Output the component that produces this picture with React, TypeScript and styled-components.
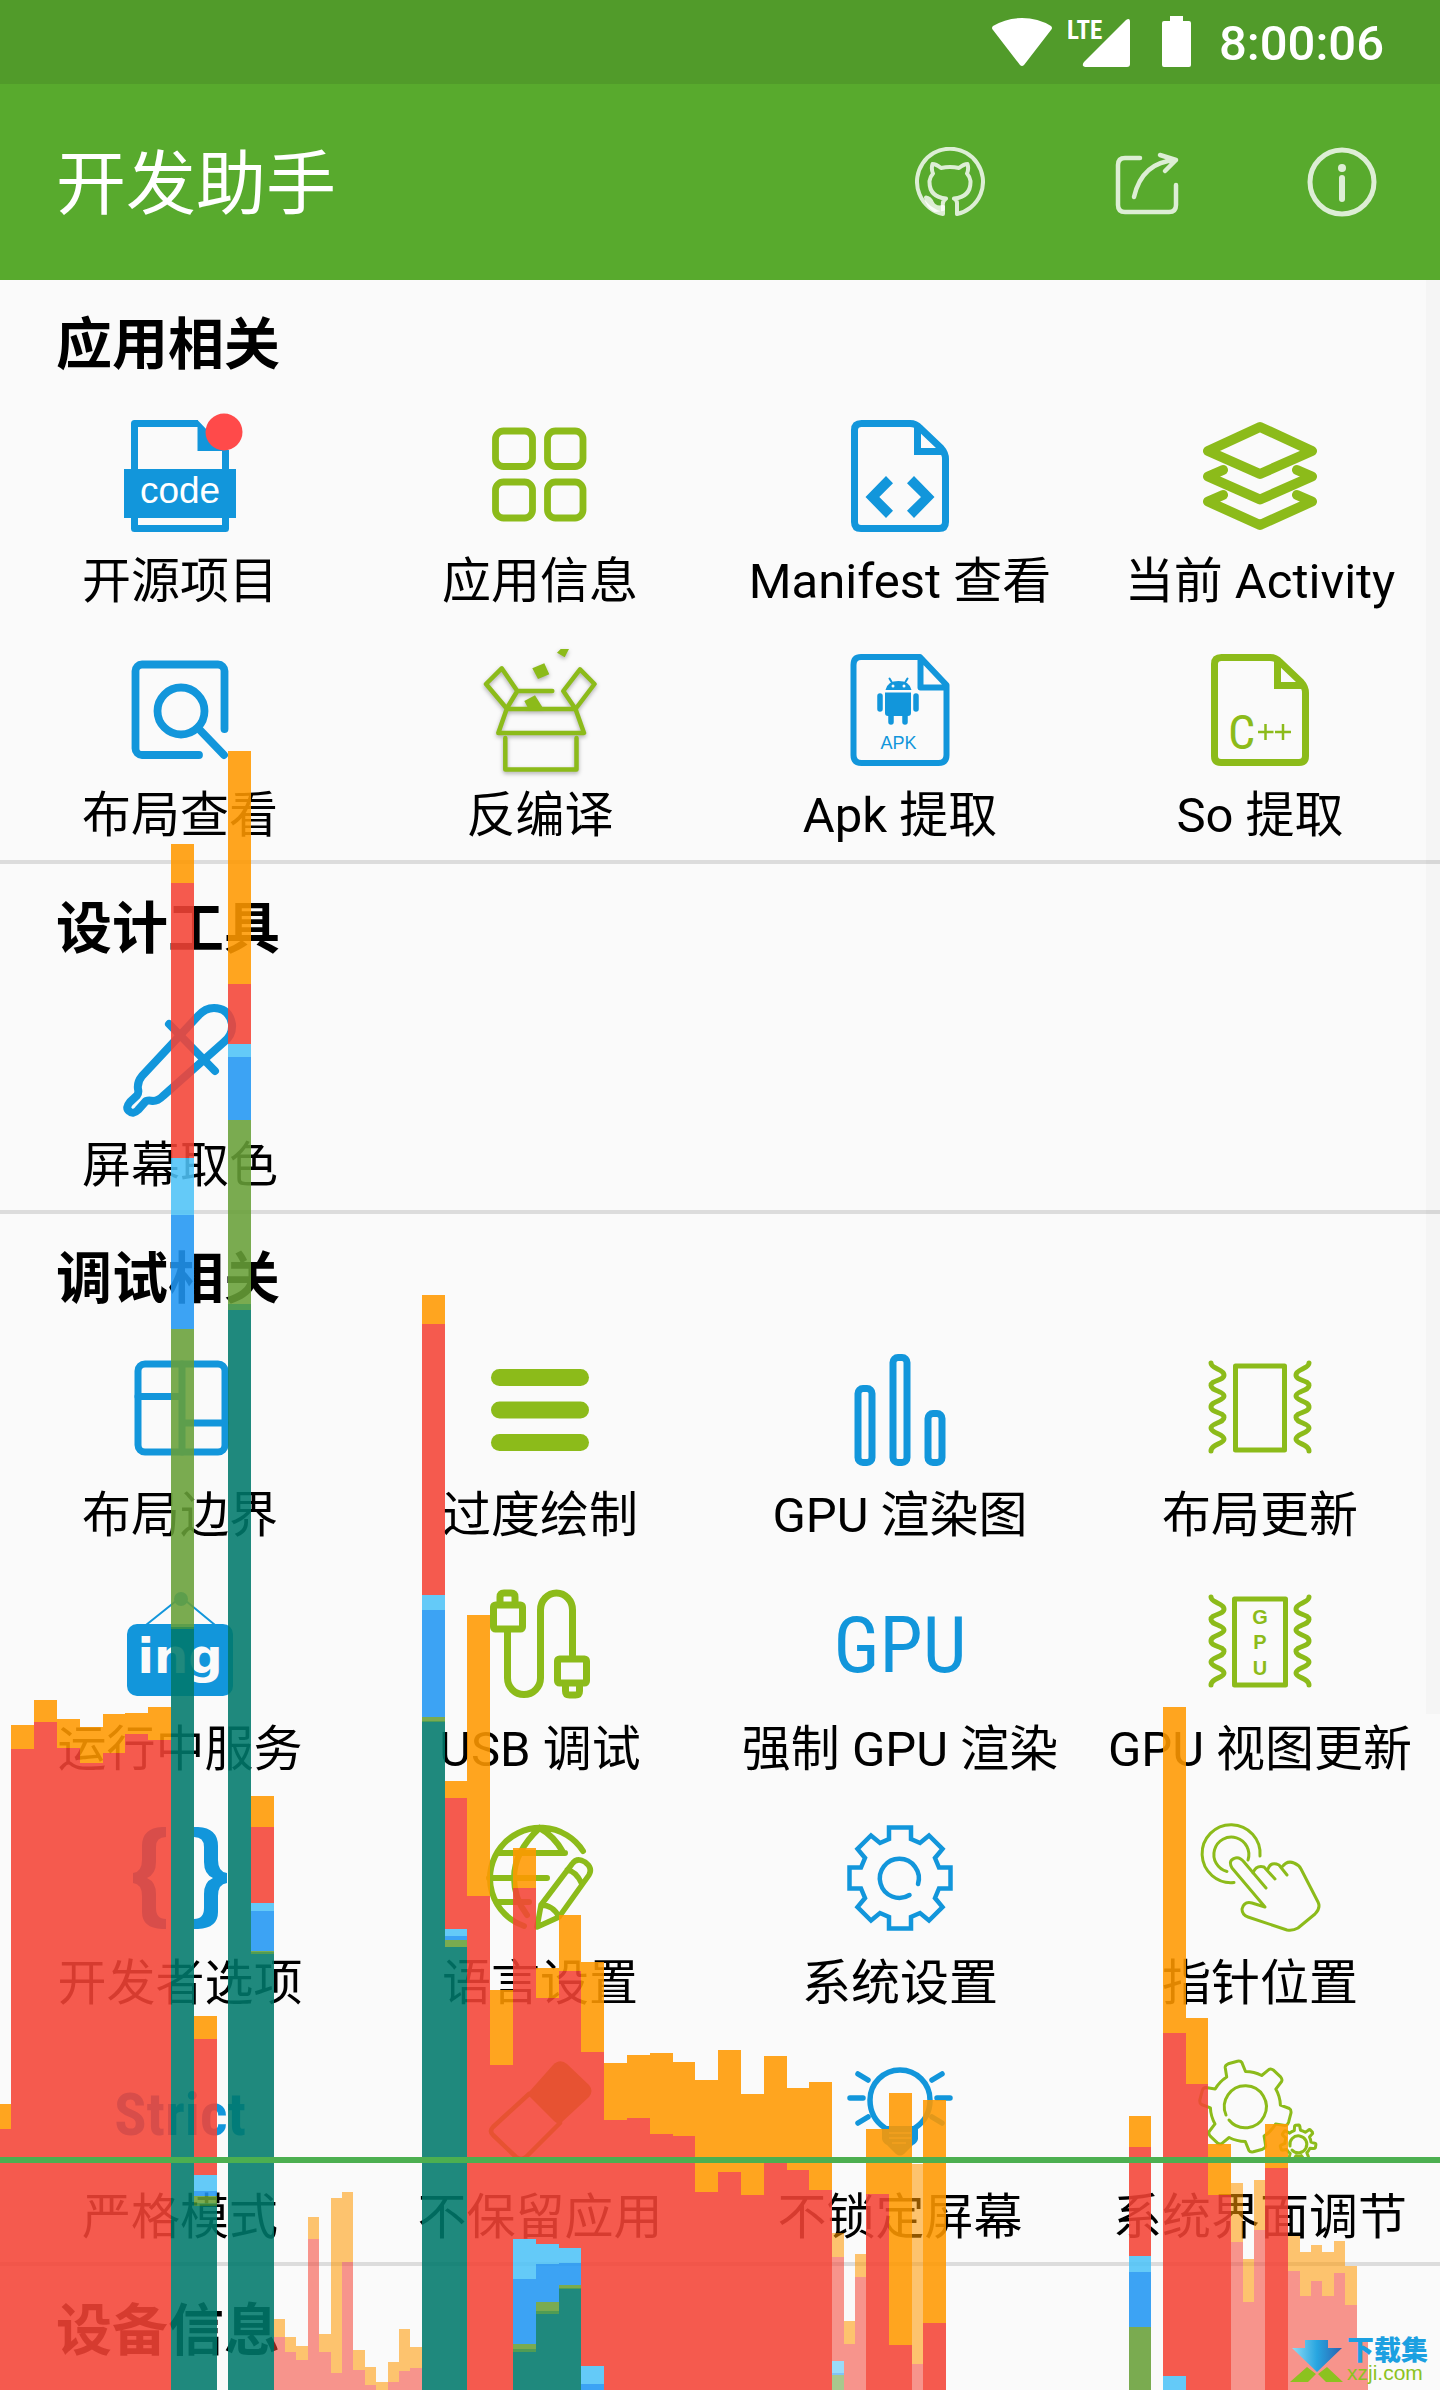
import React from 'react';
import styled, { createGlobalStyle } from 'styled-components';

const BLUE = '#1296db';
const GREEN = '#8cbb1a';
const NARROW = "'Roboto Condensed', 'Liberation Sans Narrow', 'DejaVu Sans Condensed', sans-serif";

const GlobalStyle = createGlobalStyle`
  *, *::before, *::after { box-sizing: border-box; }
  body {
    margin: 0;
    background: #fafafa;
    color: #000;
    font-family: Roboto, 'Noto Sans CJK SC', sans-serif;
  }
  h1, h2, p, ul { margin: 0; padding: 0; }
`;

const Page = styled.div`
  position: relative;
  overflow: hidden;
  min-height: 100vh;
`;

const StatusBar = styled.div`
  display: flex;
  align-items: center;
  justify-content: flex-end;
  height: 84px;
  padding: 0 56px;
  background: #519b2a;
  color: #fff;
`;

const StatusIcon = styled.svg<{ $gap: number }>`
  flex: none;
  margin-right: ${(p) => p.$gap}px;
  fill: #fff;
`;

const Clock = styled.time`
  padding-top: 4px;
  font-size: 49px;
  line-height: 56px;
  font-weight: 500;
`;

const Toolbar = styled.header`
  display: flex;
  align-items: center;
  height: 196px;
  padding-left: 56px;
  background: #58aa2d;
  color: #fff;
`;

const Title = styled.h1`
  flex: 1;
  padding-top: 6px;
  font-size: 70px;
  line-height: 84px;
  font-weight: 400;
`;

const ToolButton = styled.button`
  display: flex;
  align-items: center;
  justify-content: center;
  width: 196px;
  height: 196px;
  padding: 0;
  border: 0;
  background: none;
  color: rgba(255, 255, 255, 0.8);
  cursor: pointer;
`;

const Section = styled.section`
  border-bottom: 4px solid #dcdcdc;
  &:last-child { border-bottom: 0; padding-bottom: 12px; }
`;

const SectionTitle = styled.h2`
  padding: 32px 56px 14px;
  font-size: 56px;
  line-height: 66px;
  font-weight: 700;
`;

const Grid = styled.ul`
  display: grid;
  grid-template-columns: repeat(4, minmax(0, 1fr));
  list-style: none;
`;

const Tile = styled.button`
  display: flex;
  flex-direction: column;
  align-items: center;
  gap: 21px;
  width: 100%;
  padding: 28px 0 15px;
  border: 0;
  background: none;
  color: inherit;
  font-family: inherit;
  font-size: 49px;
  line-height: 58px;
  white-space: nowrap;
  cursor: pointer;
`;

const IconSvg = styled.svg<{ $color: string }>`
  display: block;
  width: 112px;
  height: 112px;
  overflow: visible;
  color: ${(p) => p.$color};
`;

const ScrollThumb = styled.div`
  position: absolute;
  top: 280px;
  right: 0;
  width: 14px;
  height: 60%;
  background: rgba(0, 0, 0, 0.02);
`;

const Overlay = styled.svg`
  position: absolute;
  left: 0;
  bottom: 0;
  width: 100%;
  height: 2390px;
  pointer-events: none;
`;

const Watermark = styled.div`
  position: absolute;
  right: 12px;
  bottom: 7px;
  display: flex;
  align-items: center;
  gap: 4px;
`;

const WatermarkText = styled.div`
  display: flex;
  flex-direction: column;
`;

const WatermarkName = styled.span`
  color: #1ba0e1;
  font-size: 27px;
  line-height: 24px;
  font-weight: 900;
`;

const WatermarkSite = styled.span`
  color: #8cc21f;
  font-family: 'Liberation Sans', sans-serif;
  font-size: 21px;
  line-height: 20px;
  font-weight: 400;
`;

/* ---------- icons ---------- */

const stroke = (width: number) => ({
  fill: 'none',
  stroke: 'currentColor',
  strokeWidth: width,
  strokeLinecap: 'round' as const,
  strokeLinejoin: 'round' as const,
});

const gearPath = (cx: number, cy: number, root: number, tip: number, teeth: number, start: number) => {
  const step = 360 / teeth;
  const at = (deg: number, r: number) => {
    const a = (deg * Math.PI) / 180;
    return `${(cx + r * Math.cos(a)).toFixed(1)} ${(cy + r * Math.sin(a)).toFixed(1)}`;
  };
  let d = '';
  for (let i = 0; i < teeth; i++) {
    const m = start + i * step;
    d += `${i ? 'L' : 'M'}${at(m - step * 0.27, root)}L${at(m - step * 0.19, tip - 2)}Q${at(m - step * 0.17, tip)} ${at(m - step * 0.1, tip)}L${at(m + step * 0.1, tip)}Q${at(m + step * 0.17, tip)} ${at(m + step * 0.19, tip - 2)}L${at(m + step * 0.27, root)}A${root} ${root} 0 0 1 ${at(m + step * 0.73, root)}`;
  }
  return d + 'Z';
};

const DOC = 'M17.5 3.5H66Q72 3.5 76 8L97 28Q101.5 33 101.5 39V102q0 6.5-6.5 6.5H17q-6.5 0-6.5-6.5V10q0-6.5 7-6.5z';
const WAVE = 'M7 9C7 15 20 15 20 21S7 26 7 31.5S20 37 20 42S7 47 7 53S20 58 20 63.5S7 69 7 74S20 80 20 85S7 90 7 97';

const Waves = () => (
  <g {...stroke(5)}>
    <path d={WAVE} />
    <path d={WAVE} transform="matrix(-1 0 0 1 112 0)" />
  </g>
);

const icons: Record<string, React.ReactNode> = {
  code: (
    <>
      <path {...stroke(7)} strokeLinecap="butt" d="M10.5 50V3.5H74M101.5 30V50M10.5 97v11.5h91V97" />
      <path fill="currentColor" d="M73.5 0L105 33H98v-2H73.5z" />
      <path fill="currentColor" d="M0 49h112v49H0z" />
      <text x="56" y="83" fill="#fff" fontFamily="Liberation Sans, sans-serif" fontSize="37" textAnchor="middle">code</text>
      <circle cx="100" cy="12" r="18.5" fill="#ff4a4a" />
    </>
  ),
  apps: (
    <g {...stroke(6.8)}>
      <rect x="11.5" y="11" width="37" height="35.5" rx="8" />
      <rect x="63.5" y="11" width="35.5" height="35.5" rx="8" />
      <rect x="11.5" y="62" width="37" height="36" rx="8" />
      <rect x="63.5" y="62" width="35.5" height="36" rx="8" />
    </g>
  ),
  manifest: (
    <>
      <path {...stroke(7)} d={DOC} />
      <path {...stroke(7)} strokeLinecap="butt" strokeLinejoin="miter" d="M73.5 5V31.5H100" />
      <path fill="currentColor" d="M42 56L21.5 77 42 98l7-7.3L35.3 77 49 63.3zM70 56l20.5 21L70 98l-7-7.3L77 77 63 63.3z" />
    </>
  ),
  layers: (
    <path {...stroke(10)} d="M56 7L108 31 56 54 4 31zM19 50L4 56.5 56 79.5 108 56.5 93 50M19 75L4 81.5 56 105 108 81.5 93 75" />
  ),
  search: (
    <g {...stroke(7.8)}>
      <path d="M100.5 75V17a6.5 6.5 0 0 0-6.500-6.500H18A6.5 6.5 0 0 0 11.500 17V94.500a6.5 6.5 0 0 0 6.500 6.500H75" />
      <circle cx="57" cy="57" r="23.5" />
      <path d="M74 74L100 101" />
    </g>
  ),
  box: (
    <g style={{ filter: 'drop-shadow(0 2px 2px rgba(0,0,0,.3))' }}>
      <path {...stroke(4.5)} d="M17.7 14.3L2 30 22.7 54.5 33.3 37zM33.3 37H68.3M96 15.3L110.5 30 91.5 55 79.3 37zM22.7 55H91.5L100 79H14.3zM21.3 84V115.5H92.5V84" />
      <path fill="currentColor" d="M48.3 14.3l12-5 5 11-11.3 4.7zM40.3 47L51 41.3 58.3 53l-14 1.500zM73-1.3L76.7-5H85l-4.300 8.300z" />
    </g>
  ),
  apk: (
    <>
      <path {...stroke(6)} d="M17 3H76L102.5 31V101q0 8-8 8H17.5q-8 0-8-8V11q0-8 7.5-8zM76.5 4V33.5H102" />
      <path fill="currentColor" d="M41.5 36q2-9 13-9t13 9zM41 38.5H67V59q0 3-3 3H44q-3 0-3-3z" />
      <path {...stroke(2)} d="M45.5 24.5l3 5M63.5 24.5l-3 5" />
      <circle cx="49" cy="32" r="1.5" fill="#fafafa" />
      <circle cx="60" cy="32" r="1.5" fill="#fafafa" />
      <path {...stroke(5.5)} d="M36 42V55M72 42V55M47 60V68M61 60V68" />
      <text x="54.5" y="95" fill="currentColor" fontFamily="Liberation Sans, sans-serif" fontSize="18" textAnchor="middle">APK</text>
    </>
  ),
  cpp: (
    <>
      <path {...stroke(7)} d={DOC} />
      <path {...stroke(7)} strokeLinecap="butt" strokeLinejoin="miter" d="M73.5 5V31.5H100" />
      <text x="24" y="95" fill="currentColor" fontFamily={NARROW} fontSize="48">C</text>
      <path {...stroke(2.5)} strokeLinecap="butt" d="M54 78H69.5M61.500 70V86M71 78H87M79 70V86" />
    </>
  ),
  dropper: (
    <g {...stroke(8)}>
      <path d="M74 12L18 72Q13 78 14 85Q15 89 13 91.5L6 98Q1 104 5 107Q9 111 14 106L22 97Q25 96 29 97Q34 97 39 92L100 38Q109 31 108 20Q105 4 90 4Q81 4 74 12z" />
      <path d="M45 20L91 67" />
    </g>
  ),
  layout: (
    <g {...stroke(7)}>
      <rect x="14" y="10" width="87" height="88" rx="7" />
      <path d="M58 10V98M14 42.5H58M58 69H101" />
    </g>
  ),
  bars: (
    <g fill="currentColor">
      <rect x="7" y="15" width="98" height="17" rx="8.5" />
      <rect x="7" y="47.5" width="98" height="17" rx="8.5" />
      <rect x="7" y="80" width="98" height="17" rx="8.5" />
    </g>
  ),
  chart: (
    <g {...stroke(7)}>
      <rect x="14" y="34.5" width="14" height="74" rx="5" />
      <rect x="49" y="3.5" width="14" height="105" rx="5" />
      <rect x="84" y="59.5" width="14" height="49" rx="5" />
    </g>
  ),
  update: (
    <>
      <Waves />
      <rect {...stroke(5)} x="31.5" y="12" width="49" height="84" />
    </>
  ),
  running: (
    <>
      <circle cx="57" cy="11" r="7" fill="currentColor" />
      <path {...stroke(2)} d="M52 13L22 37M62 13L91 37" />
      <rect x="3" y="36" width="106" height="72" rx="10" fill="currentColor" />
      <text x="56" y="85" fill="#fafafa" fontFamily="DejaVu Sans, sans-serif" fontWeight="700" fontSize="48" textAnchor="middle">ing</text>
    </>
  ),
  usb: (
    <g {...stroke(7)}>
      <rect x="9.5" y="17" width="29" height="24" rx="2" />
      <path d="M16 16V9q0-4 4-4h7q4 0 4 4v7" />
      <path d="M23.5 44V90a16.5 16.5 0 0 0 33 0V22a16 17 0 0 1 32 0V67" />
      <rect x="73.5" y="71" width="29" height="24" rx="2" />
      <path d="M81.5 96v7q0 4 4 4h6q4 0 4-4v-7" />
    </g>
  ),
  gpu: (
    <text x="56" y="84" fill="currentColor" fontFamily={NARROW} fontSize="78" textAnchor="middle">GPU</text>
  ),
  gpuView: (
    <>
      <Waves />
      <rect {...stroke(5)} x="30.5" y="11" width="51" height="86" />
      <g fill="currentColor" fontFamily="Liberation Sans, sans-serif" fontWeight="700" fontSize="20" textAnchor="middle">
        <text x="56" y="36">G</text>
        <text x="56" y="61">P</text>
        <text x="56" y="87">U</text>
      </g>
    </>
  ),
  braces: (
    <g fill="currentColor">
      <path id="brace" d="M42 5H38Q18 6 18 24V38Q18 50 9 51V61Q18 62 18 74V90Q18 106 38 107H42V97Q32 97 32 86V72Q32 60 23 56Q32 52 32 40V25Q32 15 42 15z" />
      <use href="#brace" transform="matrix(-1 0 0 1 112 0)" />
    </g>
  ),
  language: (
    <>
      <path {...stroke(6)} d="M99 29A50.5 50.5 0 1 0 40 104M14 31H81M5 56H63M12 80H45M55.5 6Q30 30 30 56Q30 76 43 93M55.5 6Q70 14 79 30" />
      <path {...stroke(5.5)} d="M53 105L57 83L88 42Q93 35 101 40Q109 46 105 53L75 95ZM83 48Q92 49 98 62M57 83Q69 83 75 95" />
    </>
  ),
  settings: (
    <g {...stroke(4.5)}>
      <path strokeLinejoin="miter" d="M45 5.5H67V17L76 21L85 13.5L98.5 27L91 36L95 45.5H106.5V66.5H95L91 76L98.5 85L85 98.5L76 91L67 95V106.5H45V95L36 91L27 98.5L13.5 85L21 76L17 66.5H5.5V45.5H17L21 36L13.5 27L27 13.5L36 21L45 17Z" />
      <path d="M74 62A19.5 19.5 0 1 0 65.5 73" />
    </g>
  ),
  pointer: (
    <g {...stroke(3)}>
      <path d="M56 34A29 29 0 1 0 30 60.5M44 38A17.5 17.5 0 1 0 23 49.5" />
      <path d="M49 51Q52 43 60 45L71 57M64 47Q67 39 75 43L83 53M78 45Q83 38 90 41Q95 43 97 47L114 80Q117 86 111 92L94 106Q89 109 83 108L44 95Q38 93 38 87Q40 79 48 81L61 85L28 46Q24 39 30 36.5Q35 34 40 40L62 66" />
    </g>
  ),
  strict: (
    <text x="56" y="79" fill="currentColor" fontFamily={NARROW} fontWeight="700" fontSize="60" textAnchor="middle">Strict</text>
  ),
  eraser: (
    <>
      <path fill="currentColor" d="M45 36L69 9Q76 2 83 8L105 29Q110 35 105 41L78 66Q74 69 70 65L45 40z" />
      <path {...stroke(4.5)} d="M45 38L9 71Q5 75 9 79L32 101Q37 105 42 101L76 67" />
    </>
  ),
  bulb: (
    <>
      <path {...stroke(5.5)} d="M41 72Q26 62 26 44A30 30 0 0 1 86 44Q86 62 71 72M6 42H19M14 18L24 24M14 67L24 61M106 42H93M98 18L88 24M98 67L88 61" />
      <path fill="currentColor" d="M38 70H74V83Q73 87 69 89L60 98Q56 101 52 98L43 89Q39 87 38 83z" />
      <path d="M45 77H67M45 82H67M48 87H62" stroke="#fafafa" strokeWidth="1.5" opacity=".6" />
    </>
  ),
  tuner: (
    <g {...stroke(3)}>
      <path d={gearPath(41.4, 50.5, 35, 46, 6, 14)} />
      <path d="M22 59A21 21 0 1 1 25 64" />
      <path d={gearPath(94, 87, 13, 18, 7, 10)} />
      <path d="M86 90A8.5 8.5 0 1 1 88 94" />
    </g>
  ),
};

type Item = { icon: string; label: string };
const sections: { title: string; items: Item[] }[] = [
  {
    title: '应用相关',
    items: [
      { icon: 'code', label: '开源项目' },
      { icon: 'apps', label: '应用信息' },
      { icon: 'manifest', label: 'Manifest 查看' },
      { icon: 'layers', label: '当前 Activity' },
      { icon: 'search', label: '布局查看' },
      { icon: 'box', label: '反编译' },
      { icon: 'apk', label: 'Apk 提取' },
      { icon: 'cpp', label: 'So 提取' },
    ],
  },
  { title: '设计工具', items: [{ icon: 'dropper', label: '屏幕取色' }] },
  {
    title: '调试相关',
    items: [
      { icon: 'layout', label: '布局边界' },
      { icon: 'bars', label: '过度绘制' },
      { icon: 'chart', label: 'GPU 渲染图' },
      { icon: 'update', label: '布局更新' },
      { icon: 'running', label: '运行中服务' },
      { icon: 'usb', label: 'USB 调试' },
      { icon: 'gpu', label: '强制 GPU 渲染' },
      { icon: 'gpuView', label: 'GPU 视图更新' },
      { icon: 'braces', label: '开发者选项' },
      { icon: 'language', label: '语言设置' },
      { icon: 'settings', label: '系统设置' },
      { icon: 'pointer', label: '指针位置' },
      { icon: 'strict', label: '严格模式' },
      { icon: 'eraser', label: '不保留应用' },
      { icon: 'bulb', label: '不锁定屏幕' },
      { icon: 'tuner', label: '系统界面调节' },
    ],
  },
  { title: '设备信息', items: [] },
];

/* ---------- frame-time profile ---------- */

// Stage colours from the top of a bar to its foot.
const STAGES = ['#ff9800', '#f44336', '#4fc3f7', '#2196f3', '#689f38', '#388e3c', '#00796b'];
const FLOOR = 2390;
const STRONG = 0.88;
const FAINT = 0.56;

// [left, right, opacity, top of each stage...]
const frames: number[][] = [
  [0, 11, STRONG, 2104, 2129],
  [11, 34, STRONG, 1725, 1749],
  [34, 57, STRONG, 1700, 1722],
  [57, 80, STRONG, 1719, 1748],
  [80, 103, STRONG, 1727, 1763],
  [103, 125, STRONG, 1714, 1753],
  [125, 148, STRONG, 1713, 1734],
  [148, 171, STRONG, 1707, 1740],
  [171, 194, STRONG, 844, 883, 1158, 1215, 1329, 1627, 1629],
  [194, 217, STRONG, 2016, 2039, 2175, 2191, 2196, 2203, 2206],
  [228, 251, STRONG, 751, 984, 1044, 1057, 1120, 1304, 1310],
  [251, 274, STRONG, 1796, 1827, 1903, 1911, 1951, 1952, 1954],
  [274, 285, FAINT, 2319, 2337],
  [285, 296, FAINT, 2337, 2352],
  [296, 308, FAINT, 2346, 2360],
  [308, 319, FAINT, 2217, 2239],
  [319, 331, FAINT, 2334, 2352],
  [331, 342, FAINT, 2198, 2373],
  [342, 353, FAINT, 2192, 2262],
  [353, 365, FAINT, 2350, 2370],
  [365, 376, FAINT, 2367, 2385],
  [376, 388, FAINT, 2382],
  [388, 399, FAINT, 2362, 2382],
  [399, 410, FAINT, 2329, 2371],
  [410, 422, FAINT, 2347, 2368],
  [422, 445, STRONG, 1295, 1324, 1595, 1610, 1717, 1721, 1722],
  [445, 467, STRONG, 1781, 1798, 1929, 1936, 1940, 1947, 1947],
  [467, 490, STRONG, 1615, 1896],
  [490, 513, STRONG, 1990, 2065],
  [513, 536, STRONG, 1848, 1888, 2239, 2279, 2344, 2349, 2352],
  [536, 559, STRONG, 1968, 1998, 2244, 2264, 2302, 2311, 2314],
  [559, 581, STRONG, 1915, 1971, 2248, 2263, 2285, 2288, 2289],
  [581, 604, STRONG, 1962, 2052, 2366, 2384],
  [604, 627, STRONG, 2063, 2120],
  [627, 650, STRONG, 2055, 2118],
  [650, 673, STRONG, 2053, 2134],
  [673, 695, STRONG, 2062, 2136],
  [695, 718, STRONG, 2080, 2192],
  [718, 741, STRONG, 2050, 2172],
  [741, 764, STRONG, 2094, 2195],
  [764, 787, STRONG, 2056, 2161],
  [787, 809, STRONG, 2088, 2170],
  [809, 832, STRONG, 2082, 2190],
  [832, 844, FAINT, 2233, 2257, 2361, 2373, 2375],
  [844, 855, FAINT, 2321, 2344],
  [855, 866, FAINT, 2254, 2277],
  [866, 889, STRONG, 2129, 2194],
  [889, 912, STRONG, 2093, 2345],
  [912, 923, FAINT, 2164, 2364],
  [923, 946, STRONG, 2100, 2323],
  [1129, 1151, STRONG, 2116, 2147, 2256, 2272, 2327],
  [1163, 1186, STRONG, 1707, 2033, 2376],
  [1186, 1208, STRONG, 2018, 2084],
  [1208, 1231, STRONG, 2144, 2195],
  [1231, 1243, FAINT, 2183, 2242],
  [1243, 1254, FAINT, 2259, 2302],
  [1254, 1265, FAINT, 2180, 2230],
  [1265, 1288, STRONG, 2124, 2168],
  [1288, 1300, FAINT, 2236, 2271],
  [1300, 1311, FAINT, 2252, 2296],
  [1311, 1322, FAINT, 2245, 2281],
  [1322, 1334, FAINT, 2252, 2296],
  [1334, 1345, FAINT, 2241, 2273],
  [1345, 1357, FAINT, 2266, 2305],
  [1357, 1368, FAINT, 2339, 2339],
];

const FrameProfile = () => (
  <Overlay viewBox="0 0 1440 2390" preserveAspectRatio="none" shapeRendering="crispEdges" aria-hidden="true">
    {frames.map(([left, right, opacity, ...tops]) =>
      tops.map((top, i) => (
        <rect
          key={`${left}-${i}`}
          x={left}
          y={top}
          width={right - left}
          height={(tops[i + 1] ?? FLOOR) - top}
          fill={STAGES[i]}
          fillOpacity={opacity}
        />
      )),
    )}
    <rect x="0" y="2157" width="1440" height="6" fill="#4caf50" />
  </Overlay>
);

export default function App() {
  return (
    <Page>
      <GlobalStyle />
      <StatusBar>
        <StatusIcon $gap={16} width="60" height="50" viewBox="0 0 60 50" role="img" aria-label="Wi-Fi">
          <path d="M1 13Q-1 11 1 9Q14 1 30 1T59 9Q61 11 59 13L32 48Q30 50 28 48z" />
        </StatusIcon>
        <StatusIcon $gap={32} width="62" height="50" viewBox="0 0 62 50" role="img" aria-label="LTE">
          <text x="-1" y="22" fontFamily={NARROW} fontWeight="700" fontSize="25">LTE</text>
          <path d="M58 3Q62 0 62 5V47Q62 50 59 50H17Q13 49 16 45z" />
        </StatusIcon>
        <StatusIcon $gap={28} width="29" height="52" viewBox="0 0 29 52" role="img" aria-label="电池">
          <path d="M8 0H21V5H27Q29 5 29 7V49Q29 51 27 51H2Q0 51 0 49V7Q0 5 2 5H8z" />
        </StatusIcon>
        <Clock>8:00:06</Clock>
      </StatusBar>

      <Toolbar>
        <Title>开发助手</Title>
        <ToolButton aria-label="GitHub">
          <svg width="70" height="70" viewBox="0 0 70 70" {...stroke(4)}>
            <path d="M28 67A33 33 0 1 1 42 67V56Q42 53 39 51.5Q56 50 55.5 34Q55 30 52 26.5Q54 22 52.5 17Q49 17 44 21Q35 19 26 21Q21 17 17.5 17Q16 22 18 26.5Q15 30 14.5 34Q14 50 31 51.5Q27 54 28 59Z" />
            <path d="M28 60Q20 62 17 56Q15 51 11 50.5Q13 59 20 63L28 62" />
          </svg>
        </ToolButton>
        <ToolButton aria-label="分享">
          <svg width="66" height="66" viewBox="0 0 66 66" {...stroke(4.5)}>
            <path d="M27 9H12Q5 9 5 16V56Q5 63 12 63H56Q63 63 63 56V36M21 48Q29 13 63 11M47 6L63 11L52 22" />
          </svg>
        </ToolButton>
        <ToolButton aria-label="关于">
          <svg width="70" height="70" viewBox="0 0 70 70" {...stroke(5)}>
            <circle cx="35" cy="35" r="32" />
            <path d="M35 31V52" strokeWidth="6" />
            <circle cx="35" cy="21" r="4" fill="currentColor" stroke="none" />
          </svg>
        </ToolButton>
      </Toolbar>

      <main>
        {sections.map((section) => (
          <Section key={section.title}>
            <SectionTitle>{section.title}</SectionTitle>
            {section.items.length > 0 && (
              <Grid>
                {section.items.map((item, i) => (
                  <li key={item.icon}>
                    <Tile>
                      <IconSvg viewBox="0 0 112 112" $color={i % 2 ? GREEN : BLUE} aria-hidden="true">
                        {icons[item.icon]}
                      </IconSvg>
                      {item.label}
                    </Tile>
                  </li>
                ))}
              </Grid>
            )}
          </Section>
        ))}
      </main>

      <ScrollThumb />
      <FrameProfile />

      <Watermark>
        <svg width="53" height="42" viewBox="0 0 53 42" aria-hidden="true">
          <defs>
            <linearGradient id="arrow" x1="0" x2="1">
              <stop offset="0" stopColor="#8fdcf5" />
              <stop offset=".5" stopColor="#27a5e0" />
              <stop offset="1" stopColor="#2a62b0" />
            </linearGradient>
          </defs>
          <path fill="url(#arrow)" d="M15 0H38V8H52L27 32 2 8H15z" />
          <path fill="#8cc21f" d="M17 27L26 34 18 42H0zM37 27L53 42H36L28 34z" />
        </svg>
        <WatermarkText>
          <WatermarkName>下载集</WatermarkName>
          <WatermarkSite>xzji.com</WatermarkSite>
        </WatermarkText>
      </Watermark>
    </Page>
  );
}
